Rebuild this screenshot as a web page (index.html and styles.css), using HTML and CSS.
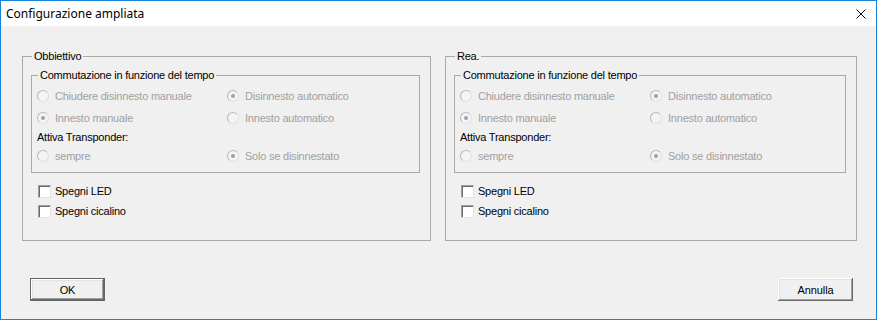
FILE: index.html
```html
<!DOCTYPE html>
<html lang="it">
<head>
<meta charset="utf-8">
<title>Configurazione ampliata</title>
<link rel="stylesheet" href="styles.css">
</head>
<body>
<div class="window">
  <div class="titlebar">
    <span class="title">Configurazione ampliata</span>
    <span class="close" aria-label="Chiudi">
      <svg width="10" height="10" viewBox="0 0 10 10"><path d="M0.5 0.5 L9.5 9.5 M9.5 0.5 L0.5 9.5" stroke="#000" stroke-width="1" fill="none"/></svg>
    </span>
  </div>
  <div class="content">
    <div class="groups">
      <fieldset class="group">
        <legend>Obbiettivo</legend>
        <fieldset class="inner">
          <legend>Commutazione in funzione del tempo</legend>
          <div class="grid">
            <div class="opt"><span class="radio"></span>Chiudere disinnesto manuale</div>
            <div class="opt"><span class="radio on"></span>Disinnesto automatico</div>
            <div class="opt"><span class="radio on"></span>Innesto manuale</div>
            <div class="opt"><span class="radio"></span>Innesto automatico</div>
            <div class="label">Attiva Transponder:</div>
            <div class="opt"><span class="radio"></span>sempre</div>
            <div class="opt"><span class="radio on"></span>Solo se disinnestato</div>
          </div>
        </fieldset>
        <div class="checks">
          <div class="check"><span class="box"></span>Spegni LED</div>
          <div class="check"><span class="box"></span>Spegni cicalino</div>
        </div>
      </fieldset>
      <fieldset class="group">
        <legend>Rea.</legend>
        <fieldset class="inner">
          <legend>Commutazione in funzione del tempo</legend>
          <div class="grid">
            <div class="opt"><span class="radio"></span>Chiudere disinnesto manuale</div>
            <div class="opt"><span class="radio on"></span>Disinnesto automatico</div>
            <div class="opt"><span class="radio on"></span>Innesto manuale</div>
            <div class="opt"><span class="radio"></span>Innesto automatico</div>
            <div class="label">Attiva Transponder:</div>
            <div class="opt"><span class="radio"></span>sempre</div>
            <div class="opt"><span class="radio on"></span>Solo se disinnestato</div>
          </div>
        </fieldset>
        <div class="checks">
          <div class="check"><span class="box"></span>Spegni LED</div>
          <div class="check"><span class="box"></span>Spegni cicalino</div>
        </div>
      </fieldset>
    </div>
    <div class="buttons">
      <button class="btn default">OK</button>
      <button class="btn">Annulla</button>
    </div>
  </div>
</div>
</body>
</html>
```
FILE: styles.css
```css
* { box-sizing: border-box; }
html, body { margin: 0; padding: 0; background: #f0f0f0; }
body { font-family: "Liberation Sans", Arial, sans-serif; font-size: 11px; color: #000; letter-spacing: -0.22px; }

.window {
  width: 877px;
  height: 320px;
  border: 1px solid #1883d7;
  background: #f0f0f0;
  display: flex;
  flex-direction: column;
}

.titlebar {
  height: 25px;
  background: #fff;
  display: flex;
  align-items: center;
  justify-content: space-between;
  padding: 0 10px 0 5px;
  flex: none;
}
.title {
  font-family: "Noto Sans", "Open Sans", sans-serif;
  font-size: 12px;
  letter-spacing: 0;
  color: #000;
}
.close { display: flex; width: 10px; height: 10px; }

.content {
  flex: 1;
  padding: 24px 19px 0 21px;
  display: flex;
  flex-direction: column;
}

.groups {
  display: grid;
  grid-template-columns: 409px 412px;
  column-gap: 14px;
}

fieldset {
  margin: 0;
  min-width: 0;
  border: 1px solid #a9a9a9;
}
legend {
  padding: 0 2px;
  margin-left: 1px;
  line-height: 13px;
  height: 13px;
}

.group {
  padding: 6px 10px 19px 8px;
}

.inner {
  padding: 3px 8px 5px 5px;
}

.grid {
  display: grid;
  grid-template-columns: 190px 1fr;
  grid-template-rows: 22px 22px 16px 22px;
}
.label {
  grid-column: 1 / span 2;
  display: flex;
  align-items: center;
  color: #000;
}
.opt {
  display: flex;
  align-items: center;
  color: #a0a0a0;
  white-space: nowrap;
}
.radio {
  width: 12px;
  height: 12px;
  border-radius: 50%;
  border: 1px solid #b8b8b8;
  border-right-color: #e0e0e0;
  border-bottom-color: #e0e0e0;
  background: #f4f4f4;
  margin-right: 6px;
  display: flex;
  align-items: center;
  justify-content: center;
  flex: none;
}
.radio.on::after {
  content: "";
  width: 4px;
  height: 4px;
  border-radius: 50%;
  background: #a0a0a0;
}

.checks {
  margin-top: 8px;
  padding-left: 7px;
}
.check {
  height: 20px;
  display: flex;
  align-items: center;
}
.box {
  width: 13px;
  height: 13px;
  background: #fff;
  border: 1px solid #a0a0a0;
  border-right-color: #e3e3e3;
  border-bottom-color: #e3e3e3;
  box-shadow: inset 1px 1px 0 #696969;
  margin-right: 4px;
  flex: none;
}

.buttons {
  margin-top: 37px;
  display: flex;
  justify-content: space-between;
  padding: 0 4px 0 8px;
}
.btn {
  width: 75px;
  height: 23px;
  font-family: "Liberation Sans", Arial, sans-serif;
  font-size: 11px;
  letter-spacing: -0.1px;
  color: #000;
  background: #f0f0f0;
  border: none;
  padding: 0;
  box-shadow: inset -1px -1px 0 #696969, inset 1px 1px 0 #fff, inset -2px -2px 0 #a0a0a0, inset 2px 2px 0 #e3e3e3;
}
.btn.default {
  border: 1px solid #646464;
  box-shadow: inset -1px -1px 0 #696969, inset 1px 1px 0 #fff, inset -2px -2px 0 #a0a0a0, inset 2px 2px 0 #e3e3e3;
}
```
